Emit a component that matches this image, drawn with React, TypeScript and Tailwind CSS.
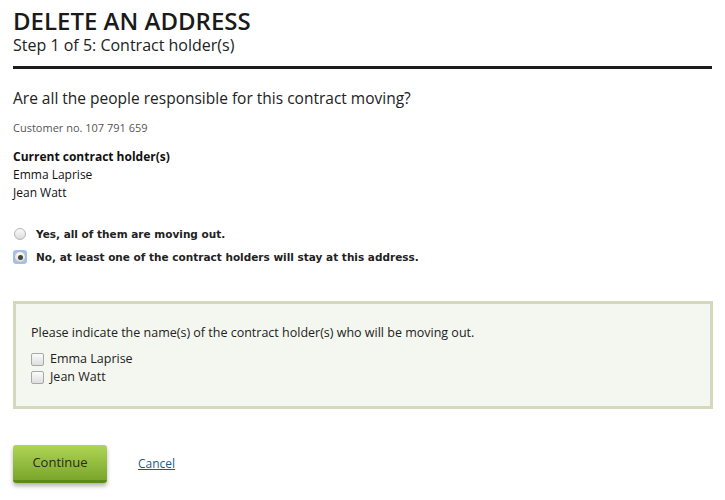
import React from 'react';

const holders = ['Emma Laprise', 'Jean Watt'];

const Radio = ({ checked }: { checked?: boolean }) => (
  <span
    className={`flex h-[14px] w-[14px] items-center justify-center rounded-[3px] ${
      checked ? 'bg-[#9cc3f5]' : ''
    }`}
  >
    <span className="flex h-[12px] w-[12px] items-center justify-center rounded-full border border-[#b5b5b5] bg-gradient-to-b from-[#fafafa] to-[#dcdcdc]">
      {checked && <span className="h-[5px] w-[5px] rounded-full bg-[#444]" />}
    </span>
  </span>
);

const Checkbox = () => (
  <span className="h-[13px] w-[13px] rounded-[2px] border border-[#a8a8a8] bg-gradient-to-b from-[#fbfbfb] to-[#dedede]" />
);

export default function App() {
  return (
    <div className="min-h-[500px] bg-white px-[13px] text-[#222]" style={{ fontFamily: '"Open Sans", sans-serif' }}>
      <div className="pt-[6px]">
        <h1 className="text-[24px] font-semibold leading-[30px] text-[#1a1a1a]">DELETE AN ADDRESS</h1>
        <div className="text-[16px] leading-[18px] text-[#222]">Step 1 of 5: Contract holder(s)</div>
        <div className="mt-[12px] h-[3px] w-[699px] bg-[#1c1c1c]" />
      </div>

      <h2 className="mt-[18px] text-[15.5px] leading-[22px] text-[#222]">Are all the people responsible for this contract moving?</h2>
      <div className="mt-[11px] text-[11px] leading-[16px] text-[#555]">Customer no. 107 791 659</div>

      <div className="mt-[12px] text-[12px] leading-[18px] text-[#111]">
        <div className="font-bold">Current contract holder(s)</div>
        {holders.map((h) => (
          <div key={h}>{h}</div>
        ))}
      </div>

      <div
        className="mt-[23px] flex flex-col gap-[5px] text-[10.5px] font-bold leading-[18px] text-[#222]"
        style={{ fontFamily: '"DejaVu Sans", Verdana, sans-serif' }}
      >
        <label className="flex items-center gap-[9px]">
          <Radio />
          <span>Yes, all of them are moving out.</span>
        </label>
        <label className="flex items-center gap-[9px]">
          <Radio checked />
          <span>No, at least one of the contract holders will stay at this address.</span>
        </label>
      </div>

      <div
        className="mt-[35px] w-[700px] border-[3px] border-[#d4d9bd] bg-[#f4f7ef] px-[15px] pt-[20px] pb-[22px] text-[12.5px] text-[#222]"
        style={{ fontFamily: '"Liberation Sans Narrow", "Open Sans", sans-serif' }}
      >
        <div className="leading-[18px]">Please indicate the name(s) of the contract holder(s) who will be moving out.</div>
        <div className="mt-[10px] flex flex-col gap-[4px]">
          {holders.map((h) => (
            <label key={h} className="flex items-center gap-[6px] leading-[14px]">
              <Checkbox />
              <span>{h}</span>
            </label>
          ))}
        </div>
      </div>

      <div className="mt-[36px] flex items-center gap-[31px]">
        <button className="h-[38px] w-[94px] rounded-[3px] border-b-[3px] border-[#5b8a18] bg-gradient-to-b from-[#b0d556] to-[#7aa62a] text-[13px] text-[#2a2a1a] shadow-[0_3px_4px_rgba(0,0,0,0.3)]">
          Continue
        </button>
        <a href="#" className="text-[12px] text-[#1d5c8c] underline">
          Cancel
        </a>
      </div>
    </div>
  );
}
